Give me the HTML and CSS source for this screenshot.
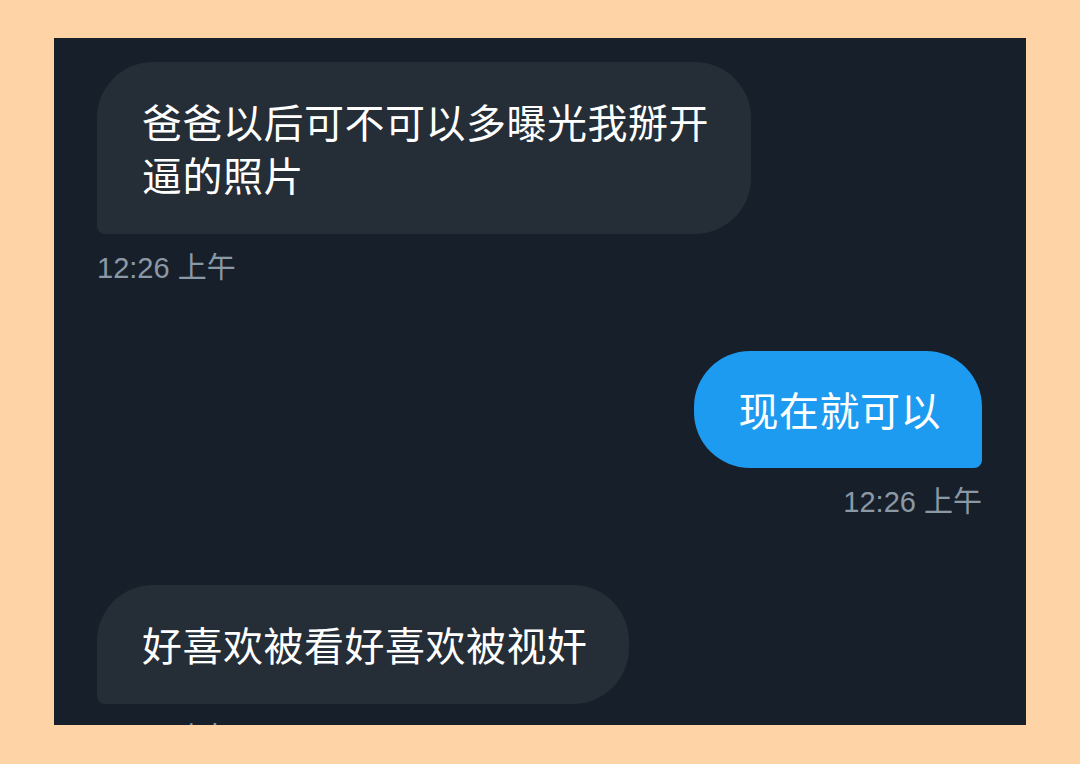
FILE: index.html
```html
<!DOCTYPE html>
<html lang="zh">
<head>
<meta charset="utf-8">
<link rel="stylesheet" href="styles.css">
</head>
<body>
<div class="page">
  <div class="panel">
    <div class="msg in">
      <div class="bubble">爸爸以后可不可以多曝光我掰开逼的照片</div>
      <div class="time">12:26 上午</div>
    </div>
    <div class="msg out">
      <div class="bubble">现在就可以</div>
      <div class="time">12:26 上午</div>
    </div>
    <div class="msg in">
      <div class="bubble">好喜欢被看好喜欢被视奸</div>
      <div class="time">12:26 上午</div>
    </div>
  </div>
</div>
</body>
</html>
```
FILE: styles.css
```css
html, body {
  margin: 0;
  padding: 0;
  background: #fed3a5;
}
.page {
  width: 1080px;
  height: 764px;
  padding: 38px 54px 0 54px;
  box-sizing: border-box;
}
.panel {
  background: #17202a;
  height: 687px;
  overflow: hidden;
  padding: 24px 44px 0 43px;
  box-sizing: border-box;
  display: flex;
  flex-direction: column;
  gap: 67px;
  font-family: "Liberation Sans", "Noto Sans CJK SC", sans-serif;
}
.msg {
  display: flex;
  flex-direction: column;
}
.msg.in { align-items: flex-start; }
.msg.out { align-items: flex-end; }
.bubble {
  max-width: 568px;
  padding: 33px 41px 33px 45px;
  font-size: 40px;
  line-height: 53px;
  letter-spacing: 0.5px;
  color: #ffffff;
  font-family: "Noto Sans CJK SC", sans-serif;
}
.msg.in .bubble {
  background: #252d36;
  border-radius: 56px 56px 56px 8px;
}
.msg.out .bubble {
  background: #1d9bf0;
  border-radius: 56px 56px 8px 56px;
  padding: 32px 41px 32px 45px;
}
.time {
  margin-top: 18px;
  font-size: 29px;
  line-height: 32px;
  color: #8b98a5;
}
```
